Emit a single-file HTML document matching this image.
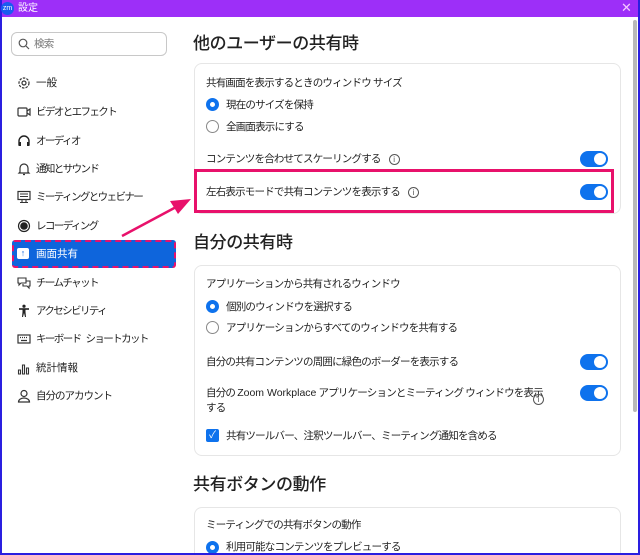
<!DOCTYPE html>
<html style="overflow:hidden;width:640px;height:555px"><head><meta charset="utf-8">
<style>
*{margin:0;padding:0;box-sizing:border-box}
body{width:640px;height:555px;overflow:hidden;background:#fff;font-family:"Liberation Sans","Noto Sans CJK JP",sans-serif;color:#222;position:relative}
.a{position:absolute;white-space:nowrap}
.t{font-size:10.5px;line-height:14px;color:#222;letter-spacing:-0.8px}
.h{font-size:17px;line-height:22px;color:#222;font-weight:500;letter-spacing:-0.4px}
.card{position:absolute;left:194px;width:427px;border:1px solid #e6e6e6;border-radius:8px;background:#fff}
.tg{position:absolute;left:580px;width:28px;height:16px;border-radius:8px;background:#0e72ed}
.tg:after{content:"";position:absolute;right:2px;top:2px;width:12px;height:12px;border-radius:50%;background:#fff}
.rd{position:absolute;left:206px;width:13px;height:13px;border-radius:50%;border:1px solid #888;background:#fff}
.rd.on{border:4px solid #0e72ed}
.info{display:inline-block;vertical-align:middle;margin-left:8px;width:11px;height:11px;border:1px solid #555;border-radius:50%;font-size:8px;line-height:9px;text-align:center;color:#555;letter-spacing:0}
.ic{position:absolute;left:17px;width:14px;height:14px}
.mi{position:absolute;left:36px;font-size:10.5px;line-height:14px;color:#222;white-space:nowrap;letter-spacing:-1.6px}
</style></head><body>
<div class="a" style="left:0;top:0;width:640px;height:17px;background:#9d2ff8"></div>
<div class="a" style="left:0;top:0;width:2px;height:555px;background:#2a1fe0"></div>
<div class="a" style="left:638px;top:0;width:2px;height:555px;background:#2a1fe0"></div>
<div class="a" style="left:1px;top:2px;width:13px;height:13px;border-radius:50%;background:#1a5cf0;color:#fff;font-size:7px;line-height:13px;text-align:center">zm</div>
<div class="a" style="left:18px;top:1px;font-size:10px;line-height:15px;color:#fff">設定</div>
<div class="a" style="left:621px;top:0px;font-size:13px;line-height:16px;color:#f5c8ff">✕</div>
<div class="a" style="left:633px;top:20px;width:4px;height:392px;background:#b9b9b9;border-radius:2px"></div>

<div class="a" style="left:11px;top:32px;width:156px;height:24px;border:1px solid #c8c8c8;border-radius:6px"></div>
<svg class="a" style="left:18px;top:38px" width="12" height="12" viewBox="0 0 12 12"><circle cx="5" cy="5" r="3.8" fill="none" stroke="#555" stroke-width="1.2"/><path d="M8 8l3 3" stroke="#555" stroke-width="1.2"/></svg>
<div class="a t" style="left:34px;top:37px;color:#777">検索</div>

<svg class="ic" style="top:76px" viewBox="0 0 14 14"><circle cx="7" cy="7" r="5" fill="none" stroke="#333" stroke-width="1.2" stroke-dasharray="2.5 1.2"/><circle cx="7" cy="7" r="2" fill="none" stroke="#333" stroke-width="1.2"/></svg>
<div class="mi" style="top:76px;letter-spacing:0">一般</div>
<svg class="ic" style="top:105px" viewBox="0 0 14 14"><rect x="1" y="3" width="9" height="8" rx="1" fill="none" stroke="#333" stroke-width="1.2"/><path d="M10 6l3-2v6l-3-2" fill="none" stroke="#333" stroke-width="1.2"/></svg>
<div class="mi" style="top:105px">ビデオとエフェクト</div>
<svg class="ic" style="top:134px" viewBox="0 0 14 14"><path d="M2 11V7a5 5 0 0 1 10 0v4" fill="none" stroke="#222" stroke-width="1.4"/><rect x="1.5" y="8" width="2.5" height="4" fill="#222"/><rect x="10" y="8" width="2.5" height="4" fill="#222"/></svg>
<div class="mi" style="top:134px">オーディオ</div>
<svg class="ic" style="top:162px" viewBox="0 0 14 14"><path d="M3 10V6a4 4 0 0 1 8 0v4l1 1H2z M6 12.5h2" fill="none" stroke="#333" stroke-width="1.2"/></svg>
<div class="mi" style="top:162px">通知とサウンド</div>
<svg class="ic" style="top:190px" viewBox="0 0 14 14"><rect x="1" y="1.5" width="12" height="8" fill="none" stroke="#333" stroke-width="1.2"/><path d="M3 4h8M3 6.5h8M5 9.5v3M9 9.5v3M3 12.5h8" stroke="#333" stroke-width="1.1"/></svg>
<div class="mi" style="top:190px">ミーティングとウェビナー</div>
<svg class="ic" style="top:219px" viewBox="0 0 14 14"><circle cx="7" cy="7" r="5.5" fill="none" stroke="#222" stroke-width="1.2"/><circle cx="7" cy="7" r="3.8" fill="#222"/></svg>
<div class="mi" style="top:219px">レコーディング</div>

<div class="a" style="left:12px;top:240px;width:164px;height:28px;background:#0e65dc;border:2px dashed #e8116b;border-radius:3px"></div>
<div class="a" style="left:17px;top:248px;width:12px;height:11px;background:#fff;border-radius:2px;color:#0e65dc;font-size:9px;line-height:11px;text-align:center;font-weight:bold">↑</div>
<div class="mi" style="top:247px;color:#fff;letter-spacing:0">画面共有</div>

<svg class="ic" style="top:276px" viewBox="0 0 14 14"><path d="M1 2h8v5H4l-2 2V7H1z" fill="none" stroke="#333" stroke-width="1.1"/><path d="M9 5h4v5h-1v2l-2-2H6V8" fill="none" stroke="#333" stroke-width="1.1"/></svg>
<div class="mi" style="top:276px">チームチャット</div>
<svg class="ic" style="top:304px" viewBox="0 0 14 14"><circle cx="7" cy="2.2" r="1.6" fill="#222"/><path d="M2 5h10" stroke="#222" stroke-width="1.6"/><path d="M5.5 5h3v3l.5 5H8L7 9l-1 4H5l.5-5z" fill="#222"/></svg>
<div class="mi" style="top:304px">アクセシビリティ</div>
<svg class="ic" style="top:332px" viewBox="0 0 14 14"><rect x="1" y="3" width="12" height="8" fill="none" stroke="#333" stroke-width="1.2"/><path d="M3 5.5h1M5 5.5h1M7 5.5h1M9 5.5h1M4 8.5h6" stroke="#333" stroke-width="1.2"/></svg>
<div class="mi" style="top:332px">キーボード<span style="display:inline-block;width:5px"></span>ショートカット</div>
<svg class="ic" style="top:361px" viewBox="0 0 14 14"><path d="M1.5 13V9h2v4zM5.5 13V4h2v9zM9.5 13V7h2v6z" fill="none" stroke="#333" stroke-width="1.1"/></svg>
<div class="mi" style="top:361px;letter-spacing:0">統計情報</div>
<svg class="ic" style="top:389px" viewBox="0 0 14 14"><circle cx="7" cy="4.5" r="3" fill="none" stroke="#333" stroke-width="1.2"/><path d="M1.5 13a5.5 4 0 0 1 11 0z" fill="none" stroke="#333" stroke-width="1.2"/></svg>
<div class="mi" style="top:389px;letter-spacing:-1px">自分のアカウント</div>

<div class="a h" style="left:193px;top:33px">他のユーザーの共有時</div>
<div class="card" style="top:63px;height:151px"></div>
<div class="a t" style="left:206px;top:76px">共有画面を表示するときのウィンドウ サイズ</div>
<div class="rd on" style="top:98px"></div><div class="a t" style="left:226px;top:98px">現在のサイズを保持</div>
<div class="rd" style="top:120px"></div><div class="a t" style="left:226px;top:120px">全画面表示にする</div>
<div class="a t" style="left:206px;top:152px">コンテンツを合わせてスケーリングする<span class="info">i</span></div>
<div class="tg" style="top:151px"></div>
<div class="a t" style="left:206px;top:185px">左右表示モードで共有コンテンツを表示する<span class="info">i</span></div>
<div class="tg" style="top:184px"></div>
<div class="a" style="left:194px;top:169px;width:420px;height:44px;border:3px solid #e8116b"></div>

<svg class="a" style="left:0;top:0" width="640" height="555"><path d="M122 236L178 206" stroke="#e8116b" stroke-width="2.5"/><path d="M191 199L170 201L178 214z" fill="#e8116b"/></svg>

<div class="a h" style="left:193px;top:232px">自分の共有時</div>
<div class="card" style="top:265px;height:191px"></div>
<div class="a t" style="left:206px;top:277px">アプリケーションから共有されるウィンドウ</div>
<div class="rd on" style="top:300px"></div><div class="a t" style="left:226px;top:300px">個別のウィンドウを選択する</div>
<div class="rd" style="top:321px"></div><div class="a t" style="left:226px;top:321px">アプリケーションからすべてのウィンドウを共有する</div>
<div class="a t" style="left:206px;top:355px">自分の共有コンテンツの周囲に緑色のボーダーを表示する</div>
<div class="tg" style="top:354px"></div>
<div class="a t" style="left:206px;top:386px">自分の <span style="letter-spacing:0">Zoom Workplace</span> アプリケーションとミーティング ウィンドウを表示</div>
<div class="a t" style="left:206px;top:401px">する</div>
<div class="a info" style="left:533px;top:394px;margin:0">i</div>
<div class="tg" style="top:385px"></div>
<div class="a" style="left:206px;top:429px;width:13px;height:13px;border-radius:2px;background:#0e72ed;color:#fff;font-size:10px;line-height:13px;text-align:center">✓</div>
<div class="a t" style="left:226px;top:429px">共有ツールバー、注釈ツールバー、ミーティング通知を含める</div>

<div class="a h" style="left:193px;top:474px">共有ボタンの動作</div>
<div class="card" style="top:507px;height:46px;border-bottom:none;border-radius:8px 8px 0 0"></div>
<div class="a t" style="left:206px;top:518px">ミーティングでの共有ボタンの動作</div>
<div class="rd on" style="top:541px"></div><div class="a t" style="left:226px;top:540px">利用可能なコンテンツをプレビューする</div>
<div class="a" style="left:0;top:553px;width:640px;height:2px;background:#2a1fe0"></div>
</body></html>
